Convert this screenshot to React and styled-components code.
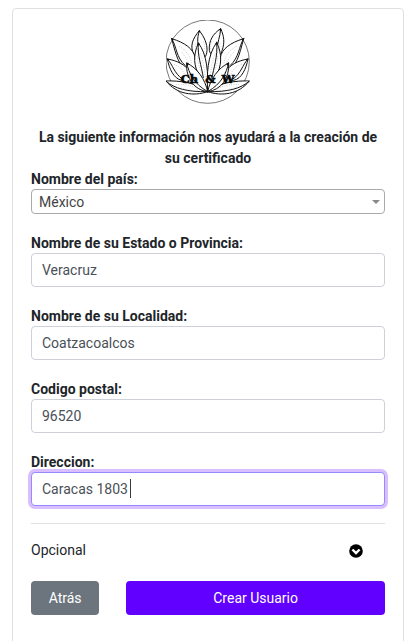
import React, { useState } from "react";
import styled, { createGlobalStyle, css } from "styled-components";

const GlobalStyle = createGlobalStyle`
  *, *::before, *::after { box-sizing: border-box; }
  body {
    margin: 0;
    background: #fff;
    color: #212529;
    font-family: Roboto, "Liberation Sans", sans-serif;
    font-size: 14px;
    line-height: 21px;
  }
`;

const Card = styled.main`
  margin: 8px 7px 8px 12px;
  padding: 11px 18px 40px;
  border: 1px solid #dfdfdf;
  border-radius: 4px;
  background: #fff;
`;

const Logo = styled.svg`
  display: block;
  width: 85px;
  height: 85px;
  margin: 0 auto 22px;
`;

const LogoText = styled.text`
  font-family: "DejaVu Serif", serif;
  font-size: 34px;
  font-weight: 700;
  stroke: #111;
  stroke-width: 2px;
`;

const Title = styled.h1`
  margin: 0;
  font-size: 14px;
  line-height: 21px;
  font-weight: 700;
  text-align: center;
`;

const Field = styled.div`
  display: flex;
  flex-direction: column;
  margin-bottom: ${(p) => (p.$last ? 17 : 19)}px;
`;

const Label = styled.label`
  line-height: 20px;
  font-weight: 700;
`;

const Control = styled.div`
  position: relative;
  display: flex;
`;

const Select = styled.select`
  flex: 1;
  min-width: 0;
  height: 25px;
  margin: 0;
  padding: 2px 20px 0 7px;
  appearance: none;
  border: 1px solid #aaa;
  border-radius: 4px;
  background: #fff;
  color: #444;
  font: inherit;
`;

const Arrow = styled.span`
  position: absolute;
  top: 11px;
  right: 5px;
  border: solid transparent;
  border-width: 4px 4px 0;
  border-top-color: #888;
  pointer-events: none;
`;

const Input = styled.input`
  flex: 1;
  min-width: 0;
  height: 34px;
  margin: 0;
  padding: 0 10px;
  border: 1px solid #ced0da;
  border-radius: 4px;
  outline: none;
  background: #fff;
  color: #495057;
  font: inherit;
  ${(p) =>
    p.$active &&
    css`
      border-color: #958bff;
      box-shadow: 0 0 0 3px #d9bfff;
      caret-color: transparent;
    `}
`;

const Caret = styled.span`
  position: absolute;
  top: 7px;
  left: 99px;
  width: 1px;
  height: 19px;
  background: #343a40;
  pointer-events: none;
`;

const Divider = styled.hr`
  width: 100%;
  margin: 0 0 16px;
  border: 0;
  border-top: 1px solid #e2e2e2;
`;

const OptionalToggle = styled.button`
  display: flex;
  align-items: center;
  justify-content: space-between;
  width: 100%;
  margin: 0 0 20px;
  padding: 0 22px 0 0;
  border: 0;
  background: none;
  color: inherit;
  font: inherit;
  cursor: pointer;
`;

const ToggleIcon = styled.svg`
  width: 14px;
  height: 14px;
`;

const Actions = styled.div`
  display: grid;
  grid-template-columns: repeat(4, minmax(0, 1fr));
  column-gap: 27px;
`;

const Button = styled.button`
  grid-column: span ${(p) => (p.$primary ? 3 : 1)};
  height: 34px;
  padding: 1px 0 0;
  border: 0;
  border-radius: 4px;
  background: ${(p) => (p.$primary ? "#6200ff" : "#6c757d")};
  color: #fff;
  font: inherit;
  cursor: pointer;
`;

const textFields = [
  { id: "estado", label: "Nombre de su Estado o Provincia:", value: "Veracruz" },
  { id: "localidad", label: "Nombre de su Localidad:", value: "Coatzacoalcos" },
  { id: "postal", label: "Codigo postal:", value: "96520" },
  { id: "direccion", label: "Direccion:", value: "Caracas 1803", active: true },
];

function SidePetals() {
  return (
    <>
      <path d="M50 87C90 99 116 118 120 144C123 162 124 178 127 190L100 184C70 168 64 139 50 87Z" />
      <path d="M50 87C65 111 63 143 91 168" />
      <path d="M37 148C68 153 91 166 105 186L117 225L80 212C56 207 43 178 37 148Z" />
      <path d="M37 148C54 166 57 190 82 208" />
    </>
  );
}

function FrontPetals() {
  return (
    <>
      <path d="M33 214C72 212 130 220 158 246C116 260 66 255 33 214Z" />
      <path d="M33 214C58 237 98 247 158 246" />
      <path d="M95 160C126 174 151 210 158 246C119 241 92 207 95 160Z" />
      <path d="M95 160C102 190 116 222 158 246" />
    </>
  );
}

function Shading() {
  return (
    <g stroke="#999" strokeWidth="2" strokeDasharray="2 5" fill="none">
      <path d="M121 102C121 118 126 127 134 135M146 96C149 106 150 112 148 122" />
      <path d="M72 110C91 121 105 134 109 161M79 127C90 139 98 151 105 171" />
      <path d="M57 164C75 171 84 181 89 197M128 139C127 160 136 180 143 201" />
      <path d="M136 132C144 153 149 180 151 210M64 225C88 222 116 228 136 242" />
      <path d="M71 233C91 240 113 243 132 244M107 187C112 204 126 223 143 235" />
    </g>
  );
}

function LotusLogo() {
  return (
    <Logo viewBox="33 31 255 255" role="img" aria-label="Ch & W">
      <circle cx="158" cy="156" r="125" fill="none" stroke="#333" strokeWidth="2" />
      <g fill="#fff" stroke="#111" strokeWidth="3" strokeLinejoin="round">
        <path d="M133 63C112 88 103 111 118 137C126 158 155 155 156 122C157 103 148 82 133 63Z" />
        <path d="M133 63C126 88 125 105 139 124" />
        <path d="M197 57C173 73 161 94 163 122C170 151 197 146 201 123C210 99 207 79 197 57Z" />
        <path d="M197 57C196 83 186 96 187 120" />
        <SidePetals />
        <g transform="translate(316 0) scale(-1 1)">
          <SidePetals />
        </g>
        <path d="M130 100C114 137 115 168 135 202L158 246C160 194 157 134 130 100Z" />
        <path d="M130 100C127 139 139 165 145 205" />
        <path d="M185 98C202 133 201 169 182 202L158 246C155 193 157 138 185 98Z" />
        <path d="M185 98C189 139 176 176 170 207" />
        <FrontPetals />
        <g transform="translate(316 0) scale(-1 1)">
          <FrontPetals />
        </g>
      </g>
      <Shading />
      <g transform="translate(316 0) scale(-1 1)">
        <Shading />
      </g>
      <g fill="#111">
        <path d="M47 84l8 3l-1 9zM34 145l8 3l-1 7zM131 97l4 9h-8zM133 60l3 8h-6zM197 54l3 9h-6zM185 95l4 9h-8zM269 84l-8 3l1 9zM282 145l-8 3l1 7zM94 157l8 5l-5 8zM222 157l-8 5l5 8z" />
        <circle cx="158" cy="245" r="4" />
      </g>
      <LogoText y="221">
        <tspan x="77">Ch</tspan>
        <tspan x="151">&amp;</tspan>
        <tspan x="200">W</tspan>
      </LogoText>
    </Logo>
  );
}

function TextField({ id, label, value, active }) {
  const [text, setText] = useState(value);
  return (
    <Field $last={active}>
      <Label htmlFor={id}>{label}</Label>
      <Control>
        <Input
          id={id}
          type="text"
          value={text}
          $active={active}
          onChange={(e) => setText(e.target.value)}
        />
        {active && <Caret />}
      </Control>
    </Field>
  );
}

export default function App() {
  return (
    <>
      <GlobalStyle />
      <Card>
        <LotusLogo />
        <form onSubmit={(e) => e.preventDefault()}>
          <Title>La siguiente información nos ayudará a la creación de su certificado</Title>
          <Field>
            <Label htmlFor="pais">Nombre del país:</Label>
            <Control>
              <Select id="pais" defaultValue="mx">
                <option value="mx">México</option>
              </Select>
              <Arrow />
            </Control>
          </Field>
          {textFields.map((field) => (
            <TextField key={field.id} {...field} />
          ))}
          <Divider />
          <OptionalToggle type="button">
            Opcional
            <ToggleIcon viewBox="0 0 14 14" aria-hidden="true">
              <circle cx="7" cy="7" r="6.8" fill="#000" />
              <path d="M3.4 5.5L7 9.1L10.6 5.5" fill="none" stroke="#fff" strokeWidth="2.4" />
            </ToggleIcon>
          </OptionalToggle>
          <Actions>
            <Button type="button">Atrás</Button>
            <Button type="submit" $primary>
              Crear Usuario
            </Button>
          </Actions>
        </form>
      </Card>
    </>
  );
}
